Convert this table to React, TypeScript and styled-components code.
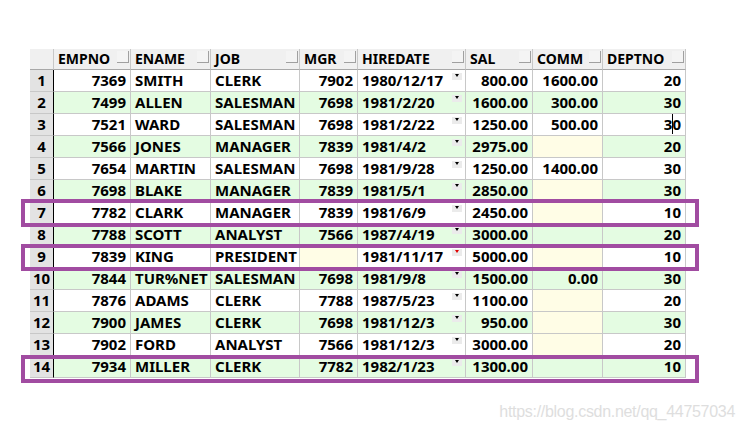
import React from "react";
import styled, { createGlobalStyle } from "styled-components";

const GlobalStyle = createGlobalStyle`
  html, body { margin: 0; padding: 0; background: #ffffff; }
  body { font-family: "Noto Sans", "DejaVu Sans", sans-serif; }
`;

type Row = {
  empno: string;
  ename: string;
  job: string;
  mgr: string | null;
  hiredate: string;
  sal: string;
  comm: string | null;
  deptno: string;
  plainNull?: boolean;
};

const rows: Row[] = [
  { empno: "7369", ename: "SMITH", job: "CLERK", mgr: "7902", hiredate: "1980/12/17", sal: "800.00", comm: "1600.00", deptno: "20" },
  { empno: "7499", ename: "ALLEN", job: "SALESMAN", mgr: "7698", hiredate: "1981/2/20", sal: "1600.00", comm: "300.00", deptno: "30" },
  { empno: "7521", ename: "WARD", job: "SALESMAN", mgr: "7698", hiredate: "1981/2/22", sal: "1250.00", comm: "500.00", deptno: "30" },
  { empno: "7566", ename: "JONES", job: "MANAGER", mgr: "7839", hiredate: "1981/4/2", sal: "2975.00", comm: null, deptno: "20" },
  { empno: "7654", ename: "MARTIN", job: "SALESMAN", mgr: "7698", hiredate: "1981/9/28", sal: "1250.00", comm: "1400.00", deptno: "30" },
  { empno: "7698", ename: "BLAKE", job: "MANAGER", mgr: "7839", hiredate: "1981/5/1", sal: "2850.00", comm: null, deptno: "30" },
  { empno: "7782", ename: "CLARK", job: "MANAGER", mgr: "7839", hiredate: "1981/6/9", sal: "2450.00", comm: null, deptno: "10" },
  { empno: "7788", ename: "SCOTT", job: "ANALYST", mgr: "7566", hiredate: "1987/4/19", sal: "3000.00", comm: null, deptno: "20", plainNull: true },
  { empno: "7839", ename: "KING", job: "PRESIDENT", mgr: null, hiredate: "1981/11/17", sal: "5000.00", comm: null, deptno: "10" },
  { empno: "7844", ename: "TUR%NET", job: "SALESMAN", mgr: "7698", hiredate: "1981/9/8", sal: "1500.00", comm: "0.00", deptno: "30" },
  { empno: "7876", ename: "ADAMS", job: "CLERK", mgr: "7788", hiredate: "1987/5/23", sal: "1100.00", comm: null, deptno: "20" },
  { empno: "7900", ename: "JAMES", job: "CLERK", mgr: "7698", hiredate: "1981/12/3", sal: "950.00", comm: null, deptno: "30" },
  { empno: "7902", ename: "FORD", job: "ANALYST", mgr: "7566", hiredate: "1981/12/3", sal: "3000.00", comm: null, deptno: "20" },
  { empno: "7934", ename: "MILLER", job: "CLERK", mgr: "7782", hiredate: "1982/1/23", sal: "1300.00", comm: null, deptno: "10", plainNull: true },
];

const headers = ["EMPNO", "ENAME", "JOB", "MGR", "HIREDATE", "SAL", "COMM", "DEPTNO"];

const Page = styled.div`
  padding: 49px 8px 0 30px;
  width: 743px;
  height: 436px;
  box-sizing: border-box;
  display: flex;
  flex-direction: column;
`;

const TableWrap = styled.div`
  position: relative;
  width: 656px;
`;

const Grid = styled.div`
  display: grid;
  grid-template-columns: 24px 77px 80px 89px 58px 108px 67px 70px 83px;
  grid-auto-rows: 22px;
  grid-template-rows: 21px;
`;

const Corner = styled.div`
  background: #f0f0f0;
  border-right: 1px solid #c8c8c8;
  border-bottom: 1px solid #a8a8a8;
`;

const HeadCell = styled.div`
  background: #f0f0f0;
  border-right: 1px solid #c8c8c8;
  border-bottom: 1px solid #a8a8a8;
  display: flex;
  align-items: flex-start;
  justify-content: space-between;
  padding-left: 4px;
  font-size: 14px;
  line-height: 20px;
  font-weight: 700;
  color: #000;
  overflow: hidden;
  white-space: nowrap;
`;

const HeadMarker = styled.span`
  width: 11px;
  height: 11px;
  margin-top: 2px;
  margin-right: 1px;
  border-right: 1px solid #a0a0a0;
  border-bottom: 1px solid #a0a0a0;
  background: #f4f4f4;
  flex: none;
`;

const RowNum = styled.div`
  background: #e3e3e3;
  border-right: 1px solid #000;
  border-bottom: 1px solid #c8c8c8;
  text-align: center;
  font-size: 15px;
  line-height: 21px;
  font-weight: 700;
  color: #000;
`;

const Cell = styled.div<{ $bg: string; $right?: boolean }>`
  position: relative;
  background: ${(p) => p.$bg};
  border-right: 1px solid #c8c8c8;
  border-bottom: 1px solid #c8c8c8;
  text-align: ${(p) => (p.$right ? "right" : "left")};
  padding: 0 4px;
  font-size: 15px;
  line-height: 21px;
  font-weight: 700;
  color: #000;
  white-space: nowrap;
  overflow: hidden;
`;

const DropMarker = styled.span<{ $red?: boolean }>`
  position: absolute;
  right: 3px;
  top: 3px;
  width: 10px;
  height: 7px;
  background: #ebebeb;
  &::after {
    content: "";
    position: absolute;
    left: 3px;
    top: 1px;
    border-left: 2px solid transparent;
    border-right: 2px solid transparent;
    border-top: 3px solid ${(p) => (p.$red ? "#e00000" : "#000")};
  }
`;

const Caret = styled.span`
  display: inline-block;
  position: relative;
  width: 0;
  &::after {
    content: "";
    position: absolute;
    left: 0;
    top: -16px;
    width: 1px;
    height: 20px;
    background: #000;
  }
`;

const Highlight = styled.div<{ $top: number; $height: number }>`
  position: absolute;
  left: -9px;
  width: 678px;
  top: ${(p) => p.$top}px;
  height: ${(p) => p.$height}px;
  box-sizing: border-box;
  border: 4px solid #a14ca1;
  pointer-events: none;
`;

const Watermark = styled.div`
  margin-top: 24px;
  align-self: flex-end;
  font-family: "Liberation Sans", Arial, sans-serif;
  font-size: 16px;
  line-height: 20px;
  color: #dedede;
  letter-spacing: -0.3px;
`;

const WHITE = "#ffffff";
const GREEN = "#e4fce2";
const YELLOW = "#fffde6";

export default function App() {
  return (
    <Page>
      <GlobalStyle />
      <TableWrap>
        <Grid>
          <Corner />
          {headers.map((h) => (
            <HeadCell key={h}>
              <span>{h}</span>
              <HeadMarker />
            </HeadCell>
          ))}
          {rows.map((r, i) => {
            const bg = i % 2 === 0 ? WHITE : GREEN;
            return (
              <React.Fragment key={r.empno}>
                <RowNum>{i + 1}</RowNum>
                <Cell $bg={bg} $right>{r.empno}</Cell>
                <Cell $bg={bg}>{r.ename}</Cell>
                <Cell $bg={bg}>{r.job}</Cell>
                <Cell $bg={r.mgr ? bg : YELLOW} $right>{r.mgr ?? ""}</Cell>
                <Cell $bg={bg}>
                  {r.hiredate}
                  <DropMarker $red={i === 8} />
                </Cell>
                <Cell $bg={bg} $right>{r.sal}</Cell>
                <Cell $bg={r.comm || r.plainNull ? bg : YELLOW} $right>{r.comm ?? ""}</Cell>
                <Cell $bg={bg} $right>
                  {i === 2 ? (
                    <>
                      3<Caret />0
                    </>
                  ) : (
                    r.deptno
                  )}
                </Cell>
              </React.Fragment>
            );
          })}
        </Grid>
        <Highlight $top={150} $height={28} />
        <Highlight $top={195} $height={27} />
        <Highlight $top={306} $height={28} />
      </TableWrap>
      <Watermark>https://blog.csdn.net/qq_44757034</Watermark>
    </Page>
  );
}
